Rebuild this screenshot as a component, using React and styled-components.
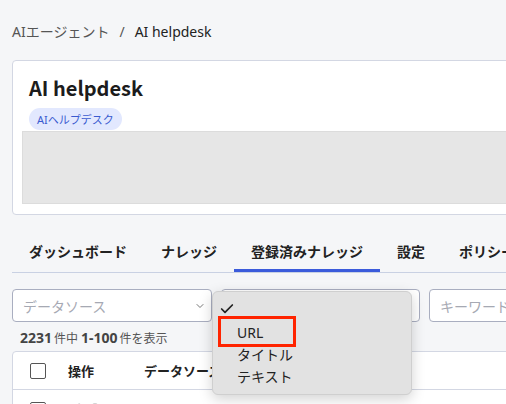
import styled, { createGlobalStyle } from "styled-components"
import { Check, ChevronDown, Pencil, Trash2 } from "lucide-react"

const GlobalStyle = createGlobalStyle`
    body {
        margin: 0;
        background: #f5f6f8;
        font-family: "Noto Sans", "Noto Sans CJK JP", sans-serif;
        color: #222;
    }
`

const Page = styled.div`
    width: 506px;
    height: 404px;
    overflow: hidden;
    padding: 0 0 0 12px;
    box-sizing: border-box;
`
const Breadcrumb = styled.div`
    display: flex;
    align-items: center;
    gap: 10px;
    height: 24px;
    padding-top: 19px;
    font-size: 14px;
    color: #555;
`
const Crumb = styled.span`
    color: ${p => p.$current ? '#222' : '#555'};
`
const Card = styled.div`
    margin-top: 17px;
    width: 620px;
    background: #fff;
    border: 1px solid #d3d7e3;
    border-radius: 4px;
    padding: 10px 10px 10px 9px;
    box-sizing: border-box;
`
const Title = styled.h1`
    margin: 3px 0 0 7px;
    font-family: "Noto Sans CJK JP", "Noto Sans", sans-serif;
    font-size: 20px;
    line-height: 28px;
    font-weight: 700;
    color: #1c1c1c;
`
const Badge = styled.span`
    display: inline-flex;
    align-items: center;
    height: 22px;
    margin: 6px 0 0 7px;
    padding: 0 8px;
    border-radius: 11px;
    background: #e2e8fe;
    color: #3a5bd0;
    font-size: 11px;
`
const Preview = styled.div`
    margin-top: 1px;
    height: 73px;
    background: #e6e6e6;
    border: 1px solid #dcdcdc;
    box-sizing: border-box;
`
const TabBar = styled.div`
    display: flex;
    margin-top: 15px;
    border-bottom: 1px solid #c9d1e3;
    width: 600px;
`
const Tab = styled.div`
    height: 42px;
    padding: 3px 17px 0;
    box-sizing: border-box;
    display: flex;
    align-items: center;
    white-space: nowrap;
    font-size: 14px;
    font-weight: 700;
    color: #222;
    border-bottom: 3px solid ${p => p.$active ? '#3b5bdb' : 'transparent'};
`
const FilterRow = styled.div`
    display: flex;
    gap: 9px;
    margin-top: 16px;
    width: 700px;
`
const SelectWrap = styled.div`
    position: relative;
    width: ${p => p.$w || 200}px;
`
const Select = styled.div`
    height: 33px;
    box-sizing: border-box;
    display: flex;
    align-items: center;
    justify-content: space-between;
    padding: 0 5px 0 10px;
    background: #fff;
    border: 1px solid #a9aec0;
    border-radius: 4px;
    font-size: 14px;
    color: #a6a9b3;
`
const Menu = styled.div`
    position: absolute;
    left: -9px;
    top: 2px;
    width: 200px;
    padding: 7px 0;
    background: #e2e2e2;
    border: 1px solid #cfcfcf;
    border-radius: 6px;
    box-shadow: 0 4px 14px rgba(0, 0, 0, 0.18);
    box-sizing: border-box;
    z-index: 2;
`
const MenuItem = styled.div`
    position: relative;
    height: 22px;
    display: flex;
    align-items: center;
    padding-left: 24px;
    font-size: 14px;
    color: #222;
`
const Tick = styled.span`
    position: absolute;
    left: 6px;
    top: 2px;
    display: flex;
`
const Highlight = styled.div`
    position: absolute;
    left: 5px;
    top: 24px;
    width: 78px;
    height: 31px;
    border: 3px solid #ff2400;
    box-sizing: border-box;
`
const Count = styled.div`
    margin-top: 6px;
    padding-left: 8px;
    height: 20px;
    line-height: 20px;
    font-size: 12px;
    color: #555;
    b {
        font-size: 14px;
        font-weight: 700;
        color: #444;
        margin-right: 2px;
    }
    b + span { margin-right: 3px; }
`
const Table = styled.div`
    margin-top: 3px;
    width: 620px;
    background: #fff;
    border: 1px solid #d3d7e3;
    border-radius: 4px;
`
const Row = styled.div`
    display: flex;
    align-items: center;
    height: ${p => p.$head ? 37 : 40}px;
    padding-left: 17px;
    border-bottom: 1px solid #d3d7e3;
    font-size: 13px;
    font-weight: 700;
`
const Box = styled.span`
    width: 14px;
    height: 14px;
    border: 1px solid #555;
    border-radius: 2px;
    background: #fff;
    margin-right: 22px;
`
const Cell = styled.span`
    width: ${p => p.$w}px;
    white-space: nowrap;
    display: flex;
    gap: 6px;
    color: #aaa;
`
const HeadCell = styled(Cell)`
    color: #222;
`

const App = () => {
    return (
        <Page>
            <GlobalStyle />
            <Breadcrumb>
                <Crumb>AIエージェント</Crumb>
                <Crumb>/</Crumb>
                <Crumb $current>AI helpdesk</Crumb>
            </Breadcrumb>
            <Card>
                <Title>AI helpdesk</Title>
                <Badge>AIヘルプデスク</Badge>
                <Preview />
            </Card>
            <TabBar>
                <Tab>ダッシュボード</Tab>
                <Tab>ナレッジ</Tab>
                <Tab $active>登録済みナレッジ</Tab>
                <Tab>設定</Tab>
                <Tab>ポリシー</Tab>
            </TabBar>
            <FilterRow>
                <SelectWrap>
                    <Select>データソース<ChevronDown size={12} color="#777" /></Select>
                </SelectWrap>
                <SelectWrap $w={199}>
                    <Select>&nbsp;<ChevronDown size={12} color="#777" /></Select>
                    <Menu>
                        <MenuItem><Tick><Check size={16} strokeWidth={2.6} color="#222" /></Tick></MenuItem>
                        <MenuItem>URL</MenuItem>
                        <MenuItem>タイトル</MenuItem>
                        <MenuItem>テキスト</MenuItem>
                        <Highlight />
                    </Menu>
                </SelectWrap>
                <SelectWrap>
                    <Select>キーワード</Select>
                </SelectWrap>
            </FilterRow>
            <Count>
                <b>2231</b><span>件中</span>
                <b>1-100</b><span>件を表示</span>
            </Count>
            <Table>
                <Row $head>
                    <Box />
                    <HeadCell $w={76}>操作</HeadCell>
                    <HeadCell $w={120}>データソース</HeadCell>
                </Row>
                <Row>
                    <Box />
                    <Cell $w={76}><Pencil size={14} /><Trash2 size={14} /></Cell>
                    <Cell $w={120}>URL</Cell>
                </Row>
            </Table>
        </Page>
    )
}

export default App
